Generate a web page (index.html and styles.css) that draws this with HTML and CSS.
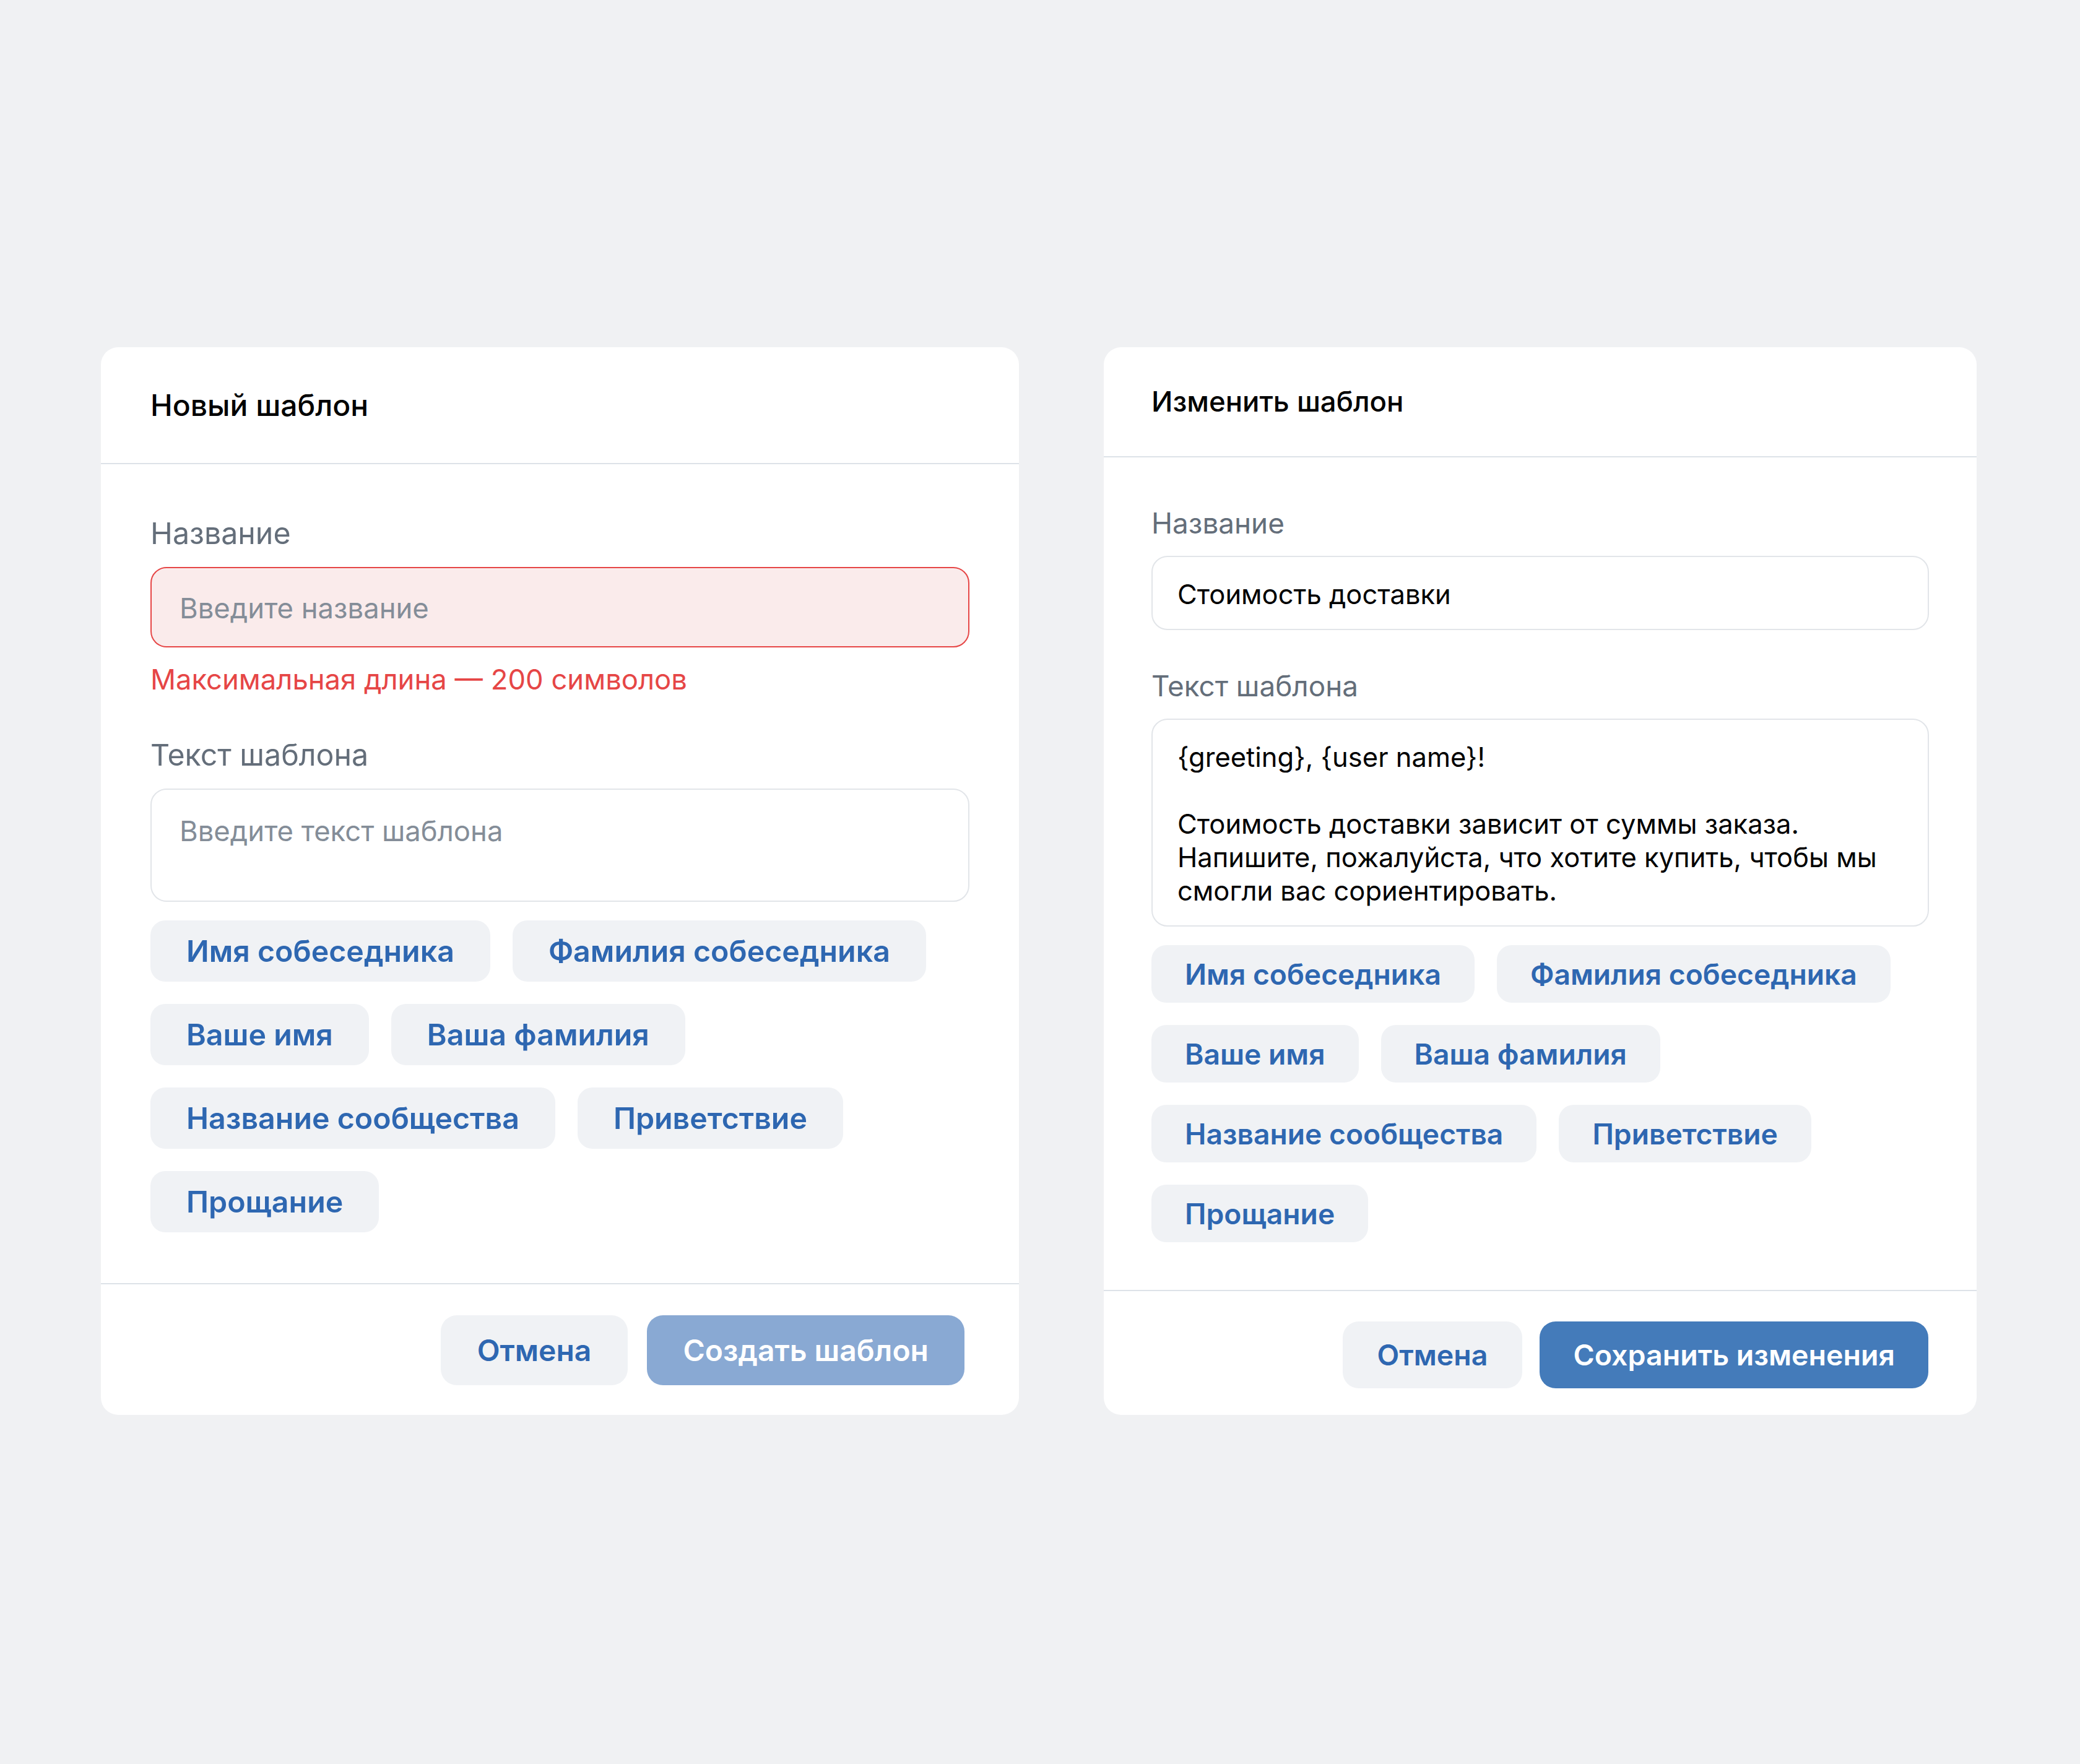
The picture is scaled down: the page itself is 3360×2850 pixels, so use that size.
FILE: index.html
```html
<!DOCTYPE html>
<html lang="ru">
<head>
<meta charset="utf-8">
<title>Шаблоны</title>
<link rel="stylesheet" href="styles.css">
</head>
<body>
<main class="stage">
  <section class="card card--new">
    <header class="card__head"><h2 class="card__title">Новый шаблон</h2></header>
    <div class="card__body">
      <div class="field__label">Название</div>
      <div class="input input--error"><span class="input__placeholder">Введите название</span></div>
      <p class="field__error">Максимальная длина — 200 символов</p>
      <div class="field__label field__label--next">Текст шаблона</div>
      <div class="textarea"><span class="input__placeholder">Введите текст шаблона</span></div>
      <div class="chips">
        <button class="chip">Имя собеседника</button>
        <button class="chip">Фамилия собеседника</button>
        <button class="chip">Ваше имя</button>
        <button class="chip">Ваша фамилия</button>
        <button class="chip">Название сообщества</button>
        <button class="chip">Приветствие</button>
        <button class="chip">Прощание</button>
      </div>
    </div>
    <footer class="card__foot">
      <button class="btn btn--secondary">Отмена</button>
      <button class="btn btn--primary btn--disabled">Создать шаблон</button>
    </footer>
  </section>

  <section class="card card--edit">
    <header class="card__head"><h2 class="card__title">Изменить шаблон</h2></header>
    <div class="card__body">
      <div class="field__label">Название</div>
      <div class="input"><span class="input__value">Стоимость доставки</span></div>
      <div class="field__label field__label--next">Текст шаблона</div>
      <div class="textarea textarea--filled">
        <p class="textarea__line">{greeting}, {user name}!</p>
        <p class="textarea__line">&nbsp;</p>
        <p class="textarea__line">Стоимость доставки зависит от суммы заказа.</p>
        <p class="textarea__line">Напишите, пожалуйста, что хотите купить, чтобы мы</p>
        <p class="textarea__line">смогли вас сориентировать.</p>
      </div>
      <div class="chips">
        <button class="chip">Имя собеседника</button>
        <button class="chip">Фамилия собеседника</button>
        <button class="chip">Ваше имя</button>
        <button class="chip">Ваша фамилия</button>
        <button class="chip">Название сообщества</button>
        <button class="chip">Приветствие</button>
        <button class="chip">Прощание</button>
      </div>
    </div>
    <footer class="card__foot">
      <button class="btn btn--secondary">Отмена</button>
      <button class="btn btn--primary">Сохранить изменения</button>
    </footer>
  </section>
</main>
</body>
</html>
```

FILE: styles.css
```css
* { box-sizing: border-box; }

html, body {
  margin: 0;
  padding: 0;
}

body {
  width: 3360px;
  min-height: 2850px;
  background: #f0f1f3;
  font-family: Inter, "Noto Sans", "Liberation Sans", sans-serif;
  color: #000;
}

.stage {
  display: flex;
  align-items: stretch;
  gap: 137px;
  padding: 561px 0 0 163px;
}

.card {
  display: flex;
  flex-direction: column;
  width: var(--card-w);
  background: #fff;
  border-radius: 28px;
}

.card--new {
  --card-w: 1483px;
  --pad-x: 80px;
  --head-h: 187px;
  --title-fs: 48px;
  --label-fs: 48.3px;
  --label-lh: 60px;
  --label-gap: 23.5px;
  --next-gap: 62px;
  --field-fs: 45.4px;
  --input-h: 130px;
  --input-px: 45px;
  --body-pt: 82px;
  --body-pb: 81px;
  --chips-mt: 30px;
  --chip-h: 99px;
  --chip-px: 58px;
  --chip-fs: 48.3px;
  --chip-gap: 36px;
  --foot-pad: 50px 88px 48px;
  --btn-h: 113px;
  --btn-fs: 48px;
  --btn-gap: 31px;
}

.card--edit {
  --card-w: 1410px;
  --pad-x: 77px;
  --head-h: 176px;
  --title-fs: 45.5px;
  --label-fs: 45.8px;
  --label-lh: 56px;
  --label-gap: 24px;
  --next-gap: 63px;
  --field-fs: 43.5px;
  --input-h: 120px;
  --input-px: 40px;
  --body-pt: 79px;
  --body-pb: 77px;
  --chips-mt: 30px;
  --chip-h: 93px;
  --chip-px: 54px;
  --chip-fs: 46.2px;
  --chip-gap: 36px;
  --foot-pad: 49px 78px 43px;
  --btn-h: 108px;
  --btn-fs: 46.5px;
  --btn-gap: 28px;
}

.card__head {
  display: flex;
  align-items: center;
  height: var(--head-h);
  padding: 0 var(--pad-x);
  border-bottom: 2px solid #dde2e8;
  box-sizing: content-box;
}

.card__title {
  margin: 0;
  font-size: var(--title-fs);
  font-weight: 500;
  line-height: 1.2;
  color: #000;
}

.card__body {
  flex: 1;
  display: flex;
  flex-direction: column;
  padding: var(--body-pt) var(--pad-x) var(--body-pb);
  border-bottom: 2px solid #dde2e8;
}

.field__label {
  font-size: var(--label-fs);
  line-height: var(--label-lh);
  color: #646e7a;
  margin-bottom: var(--label-gap);
}

.field__label--next {
  margin-top: var(--next-gap);
}

.input {
  display: flex;
  align-items: center;
  height: var(--input-h);
  padding: 4px var(--input-px) 0;
  border: 2px solid #e2e5e9;
  border-radius: 26px;
  font-size: var(--field-fs);
  line-height: 60px;
}

.input--error {
  background: #faebeb;
  border-color: #e64646;
}

.input__placeholder {
  color: #848d98;
}

.input__value {
  color: #000;
}

.field__error {
  margin: 22.5px 0 0;
  font-size: var(--field-fs);
  line-height: 60px;
  color: #e64646;
}

.textarea {
  border: 2px solid #e2e5e9;
  border-radius: 26px;
  font-size: var(--field-fs);
}

.card--new .textarea {
  height: 183px;
  padding: 37px var(--input-px) 0;
  line-height: 60px;
}

.textarea--filled {
  height: 336px;
  padding: 33px var(--input-px) 0;
  line-height: 54px;
}

.textarea__line {
  margin: 0;
  color: #000;
}

.chips {
  display: flex;
  flex-wrap: wrap;
  gap: var(--chip-gap);
  margin-top: var(--chips-mt);
}

.chip {
  display: inline-flex;
  align-items: center;
  height: var(--chip-h);
  padding: 0 var(--chip-px);
  border: 0;
  border-radius: 24px;
  background: #f0f2f5;
  color: #2e67b1;
  font-family: inherit;
  font-size: var(--chip-fs);
  font-weight: 600;
}

.card__foot {
  display: flex;
  justify-content: flex-end;
  gap: var(--btn-gap);
  padding: var(--foot-pad);
}

.btn {
  display: inline-flex;
  align-items: center;
  height: var(--btn-h);
  border: 0;
  border-radius: 26px;
  font-family: inherit;
  font-size: var(--btn-fs);
  font-weight: 600;
}

.card--new .btn--secondary { padding: 0 59px; }
.card--new .btn--primary { padding: 0 58px; }
.card--edit .btn--secondary { padding: 0 56px; }
.card--edit .btn--primary { padding: 0 54px; }

.btn--secondary {
  background: #f0f2f5;
  color: #2e67b1;
}

.btn--primary {
  background: #447bba;
  color: #fff;
}

.btn--disabled {
  background: #89a9d3;
}
```
